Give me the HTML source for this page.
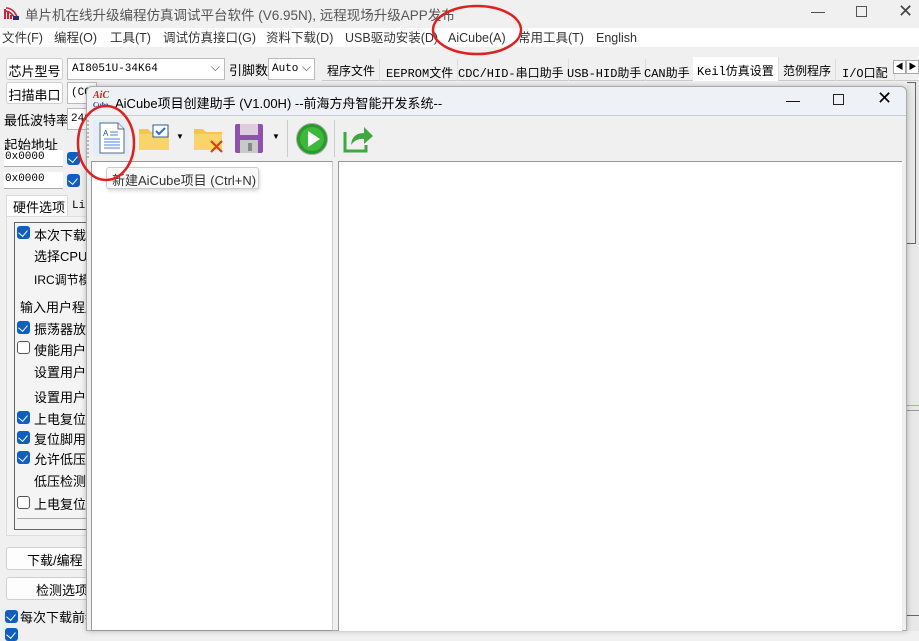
<!DOCTYPE html>
<html><head><meta charset="utf-8"><style>
*{margin:0;padding:0;box-sizing:border-box}
body{width:919px;height:631px;overflow:hidden;background:#f0f0f0;font-family:"Liberation Sans","Noto Sans CJK SC",sans-serif;font-size:13px;color:#000;position:relative}
.a{position:absolute;white-space:nowrap}
.m{position:absolute;top:30px;color:#333;font-size:12.5px;white-space:nowrap;line-height:16px;height:16px}
.btn{position:absolute;background:#fdfdfd;border:1px solid #d0d0d0;border-radius:3px;text-align:center}
.cb{position:absolute;width:13px;height:13px;border-radius:3px;background:#0f5fc2}
.cb::after{content:"";position:absolute;left:3px;top:2px;width:5px;height:7px;border:solid #fff;border-width:0 1.5px 1.5px 0;transform:rotate(40deg)}
.ucb{position:absolute;width:13px;height:13px;border-radius:3px;border:1px solid #555;background:#fff}
.mono{font-family:"Liberation Mono","Noto Sans CJK SC",monospace;font-size:11px}
.tab{position:absolute;top:59px;height:22px;border-right:1px solid #ddd;padding:3px 4px 0 4px;font-size:12px}
</style></head><body>
<div class="a" style="left:0;top:0;width:919px;height:28px;background:#f0f0f0"></div>
<svg class="a" style="left:4px;top:5px" width="16" height="16"><path d="M1 14 L1 4 M4 14 L4 7 M7 14 L7 10" stroke="#c23" stroke-width="2"/><path d="M2 3 Q10 3 14 14 M2 6 Q8 7 11 14" stroke="#c23" fill="none" stroke-width="1.6"/><rect x="9" y="11" width="6" height="4" fill="#236"/></svg>
<div class="a" style="left:25px;top:4px;font-size:13.5px;color:#555">单片机在线升级编程仿真调试平台软件 (V6.95N), 远程现场升级APP发布</div>
<div class="a" style="left:811px;top:3px;color:#444;font-size:14px">—</div>
<div class="a" style="left:856px;top:6px;width:11px;height:11px;border:1px solid #555"></div>
<div class="a" style="left:898px;top:1px;color:#444;font-size:18px">✕</div>
<div class="a" style="left:0;top:28px;width:919px;height:19px;background:#fff"></div>
<div class="m" style="left:2px">文件(F)</div>
<div class="m" style="left:54px">编程(O)</div>
<div class="m" style="left:110px">工具(T)</div>
<div class="m" style="left:163px">调试仿真接口(G)</div>
<div class="m" style="left:266px">资料下载(D)</div>
<div class="m" style="left:345px">USB驱动安装(D)</div>
<div class="m" style="left:448px">AiCube(A)</div>
<div class="m" style="left:518px">常用工具(T)</div>
<div class="m" style="left:596px">English</div>
<div class="btn" style="left:6px;top:58px;width:57px;height:22px;padding-top:2px">芯片型号</div>
<div class="a mono" style="left:67px;top:58px;width:158px;height:22px;background:#fff;border:1px solid #bbb;padding:4px 4px">AI8051U-34K64<span style="position:absolute;right:4px;top:2px;font-size:12px;color:#444">⌵</span></div>
<div class="a" style="left:229px;top:60px">引脚数</div>
<div class="a mono" style="left:268px;top:58px;width:47px;height:22px;background:#fff;border:1px solid #bbb;padding:4px 3px">Auto<span style="position:absolute;right:3px;top:2px;font-size:12px;color:#444">⌵</span></div>
<div class="a" style="left:322px;top:59px;width:597px;height:22px;background:#f0f0f0;border-bottom:1px solid #ccc"></div>
<div class="tab" style="left:323px">程序文件</div>
<div class="tab mono" style="left:382px;padding-top:5px">EEPROM文件</div>
<div class="tab mono" style="left:454px;padding-top:5px">CDC/HID-串口助手</div>
<div class="tab mono" style="left:563px;padding-top:5px">USB-HID助手</div>
<div class="tab mono" style="left:640px;padding-top:5px">CAN助手</div>
<div class="tab mono" style="left:693px;top:57px;height:24px;background:#fff;padding-top:5px">Keil仿真设置</div>
<div class="tab" style="left:779px">范例程序</div>
<div class="tab mono" style="left:838px;padding-top:5px;width:57px;overflow:hidden">I/O口配置</div>
<div class="a" style="left:893px;top:60px;width:13px;height:14px;border:1px solid #aaa;background:#fff;font-size:8px;text-align:center;line-height:12px">◀</div>
<div class="a" style="left:906px;top:60px;width:13px;height:14px;border:1px solid #aaa;background:#fff;font-size:8px;text-align:center;line-height:12px">▶</div>
<div class="btn" style="left:6px;top:82px;width:57px;height:22px;padding-top:2px">扫描串口</div>
<div class="a mono" style="left:67px;top:82px;width:30px;height:22px;background:#fff;border:1px solid #bbb;padding:4px 3px">(CO</div>
<div class="a" style="left:4px;top:110px">最低波特率</div>
<div class="a mono" style="left:67px;top:108px;width:30px;height:22px;background:#fff;border:1px solid #bbb;padding:4px 3px">240</div>
<div class="a" style="left:4px;top:134px;font-size:13.5px">起始地址</div>
<div class="a mono" style="left:4px;top:150px;width:59px;height:17px;background:#fff;border-bottom:1px solid #aaa;padding:1px 1px">0x0000</div>
<div class="cb" style="left:67px;top:152px"></div>
<div class="a mono" style="left:4px;top:172px;width:59px;height:17px;background:#fff;border-bottom:1px solid #aaa;padding:1px 1px">0x0000</div>
<div class="cb" style="left:67px;top:174px"></div>
<div class="a" style="left:6px;top:195px;width:62px;height:22px;background:#fff;border:1px solid #ddd;border-bottom:none"></div>
<div class="a" style="left:13px;top:197px">硬件选项</div>
<div class="a mono" style="left:72px;top:200px">Li</div>
<div class="a" style="left:6px;top:216px;width:90px;height:320px;background:#f4f4f4;border:1px solid #ddd"></div>
<div class="a" style="left:14px;top:222px;width:80px;height:308px;border:1px solid #666"></div>
<div class="cb" style="left:17px;top:226px"></div><div class="a" style="left:34px;top:225px">本次下载</div>
<div class="a" style="left:34px;top:246px">选择CPU指</div>
<div class="a" style="left:34px;top:271px;font-size:12px">IRC调节模</div>
<div class="a" style="left:20px;top:297px">输入用户程序</div>
<div class="cb" style="left:17px;top:321px"></div><div class="a" style="left:34px;top:319px">振荡器放</div>
<div class="ucb" style="left:17px;top:341px"></div><div class="a" style="left:34px;top:340px">使能用户</div>
<div class="a" style="left:34px;top:362px">设置用户</div>
<div class="a" style="left:34px;top:387px">设置用户</div>
<div class="cb" style="left:17px;top:411px"></div><div class="a" style="left:34px;top:409px">上电复位</div>
<div class="cb" style="left:17px;top:431px"></div><div class="a" style="left:34px;top:429px">复位脚用</div>
<div class="cb" style="left:17px;top:451px"></div><div class="a" style="left:34px;top:449px">允许低压</div>
<div class="a" style="left:34px;top:471px">低压检测</div>
<div class="ucb" style="left:17px;top:496px"></div><div class="a" style="left:34px;top:494px">上电复位</div>
<div class="a" style="left:17px;top:518px;width:75px;height:1px;background:#aaa"></div>
<div class="btn" style="left:6px;top:547px;width:90px;height:23px;padding:2px 0 0 20px;text-align:left">下载/编程</div>
<div class="btn" style="left:6px;top:577px;width:90px;height:23px;padding:2px 0 0 29px;text-align:left">检测选项</div>
<div class="cb" style="left:5px;top:610px"></div><div class="a" style="left:20px;top:607px">每次下载前都</div>
<div class="cb" style="left:5px;top:628px"></div>
<div class="a" style="left:907px;top:82px;width:12px;height:549px;background:#e8e8e8"></div>
<div class="a" style="left:907px;top:82px;width:9px;height:162px;border:1px solid #666;border-left:none"></div>
<div class="a" style="left:907px;top:405px;width:12px;height:1px;background:#aac"></div>
<div class="a" style="left:907px;top:410px;width:12px;height:1px;background:#999"></div>
<div class="a" style="left:907px;top:615px;width:12px;height:1px;background:#666"></div>
<div class="a" style="left:86px;top:86px;width:821px;height:545px;background:#f0f0f0;border:1px solid #aaa;border-radius:6px 6px 0 0;box-shadow:0 0 6px rgba(0,0,0,.25)"></div>
<div class="a" style="left:87px;top:87px;width:819px;height:29px;background:#eef2f6;border-radius:6px 6px 0 0;border-bottom:1px solid #ccc"></div>
<div class="a" style="left:93px;top:91px;font-family:'Liberation Serif',serif;font-style:italic;font-weight:bold;font-size:10px;color:#d02020;line-height:9px">AiC<br><span style="color:#2040b0;font-size:7px">Cube</span></div>
<div class="a" style="left:115px;top:93px;font-size:13px">AiCube项目创建助手 (V1.00H) --前海方舟智能开发系统--</div>
<div class="a" style="left:786px;top:92px;font-size:14px">—</div>
<div class="a" style="left:833px;top:94px;width:11px;height:11px;border:1.3px solid #222"></div>
<div class="a" style="left:877px;top:88px;font-size:18px">✕</div>
<div class="a" style="left:87px;top:120px;width:2px;height:38px;border-left:2px dotted #bbb"></div>
<div class="a" style="left:93px;top:120px;width:36px;height:36px;background:#e3eef8"></div>
<svg class="a" style="left:98px;top:122px" width="28" height="32"><path d="M2 1 H20 L26 7 V31 H2 Z" fill="#fff" stroke="#5a6a80"/><path d="M20 1 V7 H26" fill="#eee" stroke="#5a6a80"/><text x="5" y="14" font-size="8" fill="#2a5ab0" font-family="Liberation Sans">A</text><path d="M12 10h8M12 13h8M6 17h16M6 20h16M6 23h16M6 26h16" stroke="#4a80c8"/></svg>
<svg class="a" style="left:138px;top:124px" width="34" height="28"><path d="M1 5 H10 L13 8 H31 V26 H1 Z" fill="#f3c64f"/><rect x="1" y="10" width="30" height="16" fill="#f7d56a"/><rect x="15" y="1" width="15" height="12" fill="#fff" stroke="#3a5a8a"/><path d="M18 7 l3 3 l6 -6" stroke="#2a70d0" stroke-width="2" fill="none"/></svg>
<div class="a" style="left:176px;top:132px;font-size:8px">▼</div>
<svg class="a" style="left:193px;top:124px" width="34" height="30"><path d="M1 5 H10 L13 8 H29 V26 H1 Z" fill="#f3c64f"/><rect x="1" y="10" width="28" height="16" fill="#f7d56a"/><path d="M18 17 l11 11 M29 17 l-11 11" stroke="#d84020" stroke-width="2.2"/></svg>
<svg class="a" style="left:234px;top:122px" width="30" height="32"><rect x="1" y="2" width="28" height="29" rx="2" fill="#9050b0"/><rect x="6" y="2" width="18" height="11" fill="#dcd"/><rect x="6" y="18" width="18" height="13" fill="#c9c9c9"/><rect x="14" y="21" width="4" height="8" fill="#888"/></svg>
<div class="a" style="left:272px;top:132px;font-size:8px">▼</div>
<div class="a" style="left:287px;top:120px;width:1px;height:37px;background:#ccc"></div>
<svg class="a" style="left:295px;top:122px" width="34" height="34"><circle cx="17" cy="17" r="15.5" fill="#2a9a2a" stroke="#aaa"/><circle cx="17" cy="17" r="12" fill="#3cb83c"/><path d="M13 9 L25 17 L13 25 Z" fill="#fff"/></svg>
<div class="a" style="left:334px;top:120px;width:1px;height:37px;background:#ccc"></div>
<svg class="a" style="left:342px;top:123px" width="32" height="30"><path d="M3 9 V28 H24 V22" fill="none" stroke="#40a840" stroke-width="3"/><path d="M9 22 Q10 10 22 10 V4 L31 13 L22 21 V16 Q14 15 9 22 Z" fill="#40a840"/></svg>
<div class="a" style="left:91px;top:161px;width:242px;height:470px;background:#fff;border:1px solid #999;border-right-color:#ccc"></div>
<div class="a" style="left:338px;top:161px;width:564px;height:470px;background:#fff;border-top:1px solid #999;border-left:1px solid #999"></div>
<div class="a" style="left:106px;top:167px;width:153px;height:22px;background:#f9f9f9;border:1px solid #ccc;border-radius:3px;box-shadow:1px 2px 3px rgba(0,0,0,.15);padding:2px 5px;color:#333">新建AiCube项目 (Ctrl+N)</div>
<svg class="a" style="left:0;top:0" width="919" height="631"><ellipse cx="477" cy="30" rx="44" ry="24" fill="none" stroke="#e02020" stroke-width="2.5"/><ellipse cx="106" cy="143" rx="28" ry="37" fill="none" stroke="#e02020" stroke-width="2.5"/></svg>
</body></html>
